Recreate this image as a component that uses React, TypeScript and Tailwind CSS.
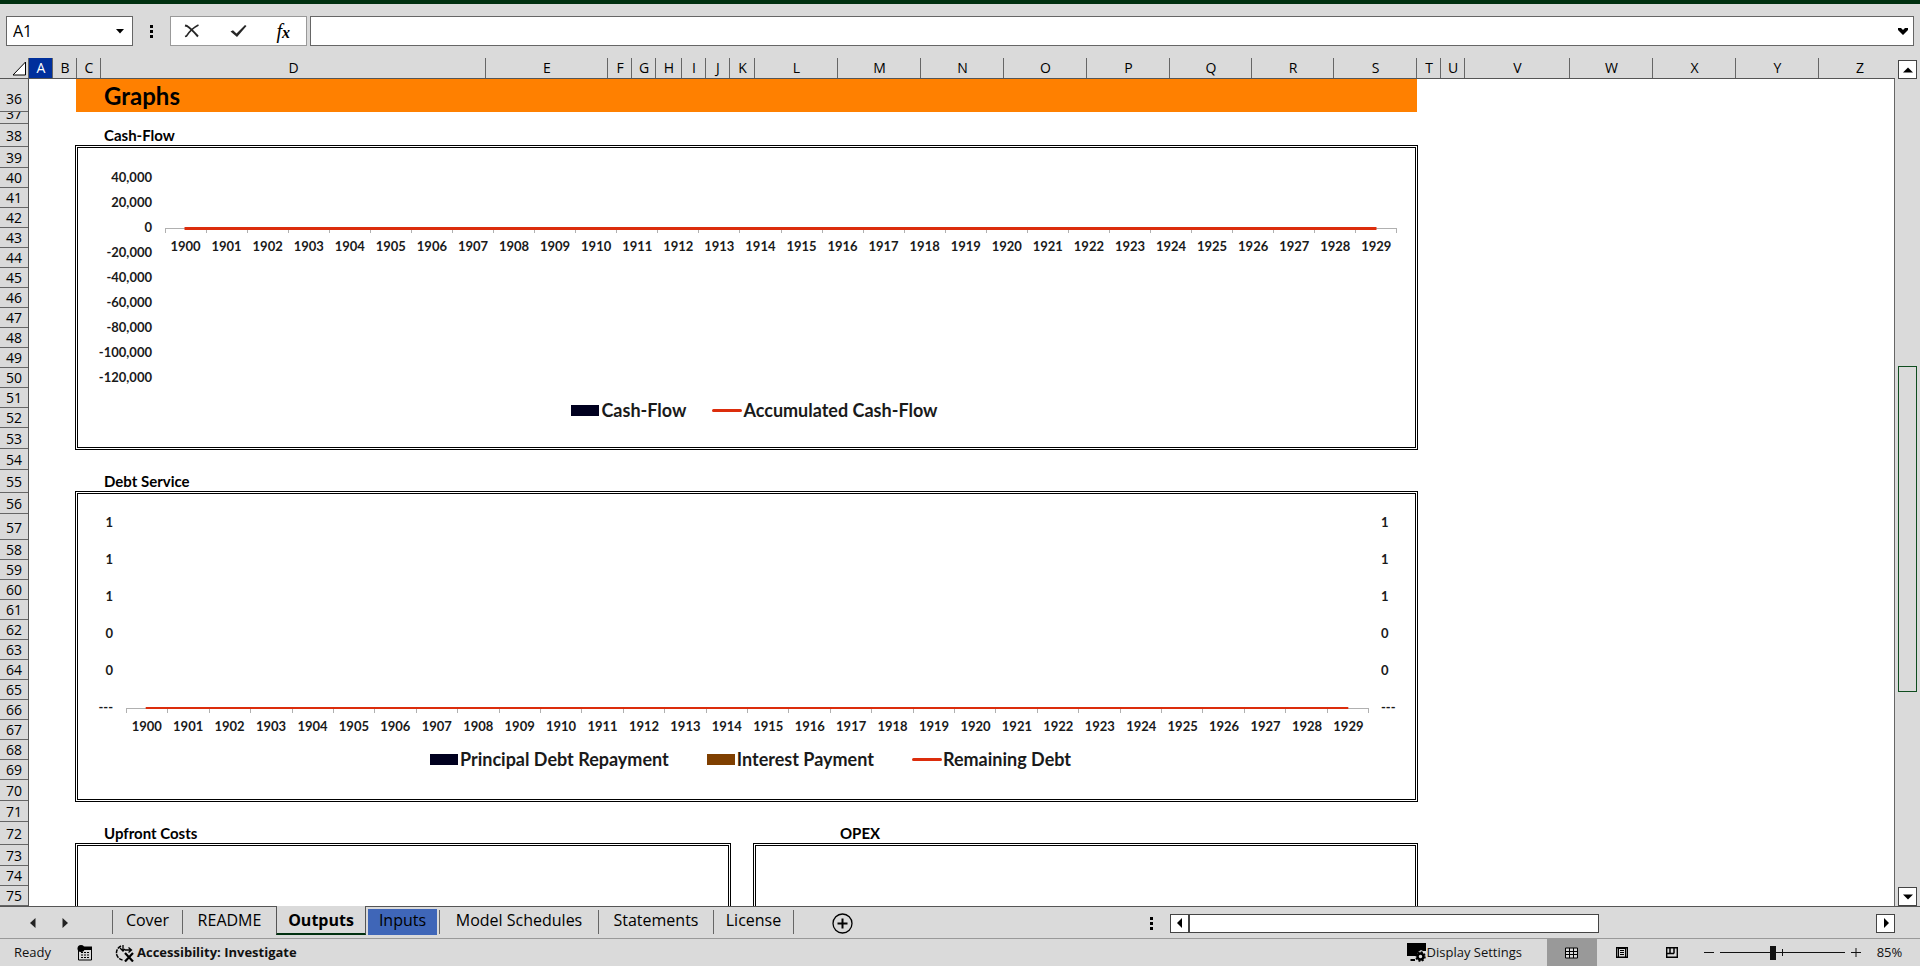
import React from 'react'

const columns = [
  { name: 'A', width: 24 }, { name: 'B', width: 24 }, { name: 'C', width: 24 }, { name: 'D', width: 385 },
  { name: 'E', width: 122 }, { name: 'F', width: 24 }, { name: 'G', width: 24 }, { name: 'H', width: 26 },
  { name: 'I', width: 24 }, { name: 'J', width: 24 }, { name: 'K', width: 25 }, { name: 'L', width: 83 },
  { name: 'M', width: 83 }, { name: 'N', width: 83 }, { name: 'O', width: 83 }, { name: 'P', width: 83 },
  { name: 'Q', width: 82 }, { name: 'R', width: 82 }, { name: 'S', width: 83 }, { name: 'T', width: 24 },
  { name: 'U', width: 24 }, { name: 'V', width: 105 }, { name: 'W', width: 83 }, { name: 'X', width: 83 },
  { name: 'Y', width: 83 },
]

// rows that differ from the default height of 20
const rowHeights: Record<number, number> = {
  36: 33, 37: 12, 38: 23, 39: 21, 53: 21, 54: 21, 55: 23, 56: 21, 57: 26, 70: 21, 71: 21, 72: 23, 73: 21,
}
const rows = Array.from({ length: 40 }, (_, i) => 36 + i)
const years = Array.from({ length: 30 }, (_, i) => 1900 + i)

function Dots() {
  return (
    <div className="flex flex-col gap-[2px]">
      <span className="h-[3px] w-[3px] bg-black" />
      <span className="h-[3px] w-[3px] bg-black" />
      <span className="h-[3px] w-[3px] bg-black" />
    </div>
  )
}

function FormulaBar() {
  return (
    <div className="flex h-[54px] shrink-0 items-start pt-3 pr-[6px] pl-[6px]">
      <div className="flex h-[30px] w-[127px] items-center border border-[#666] bg-white pr-2">
        <input aria-label="Name Box" defaultValue="A1" className="w-full min-w-0 bg-transparent pl-[6px] text-base outline-none" />
        <button aria-label="Name list">
          <svg width="8" height="5" viewBox="0 0 8 5"><path d="M0 0h8L4 4.500z" /></svg>
        </button>
      </div>
      <div className="flex h-[30px] w-[37px] items-center justify-center"><Dots /></div>
      <div className="mr-[3px] flex h-[30px] w-[137px] items-center justify-between border border-[#999] bg-white pr-4 pl-[13px]">
        <button aria-label="Cancel">
          <svg width="16" height="16" viewBox="0 0 16 16" fill="none" stroke="#262626">
            <path d="M1 2.500L3 3C7 5.500 10 9 14 13.500" strokeWidth="1.900" />
            <path d="M14.500 2C9.500 4.500 5 9 2.500 13L1 13.500" strokeWidth="1.500" />
          </svg>
        </button>
        <button aria-label="Enter">
          <svg width="17" height="14" viewBox="0 0 17 14" fill="#262626">
            <path d="M0.500 7.500L3 6.200l3.500 3.300L15 1l1.500 1L7 13z" />
          </svg>
        </button>
        <button aria-label="Insert Function" className="flex items-baseline font-['Liberation_Serif',serif] leading-5 italic">
          <span className="text-xl">f</span>
          <span className="text-base font-bold">x</span>
        </button>
      </div>
      <div className="flex h-[30px] min-w-0 flex-1 items-center border border-[#666] bg-white pr-[5px]">
        <input aria-label="Formula Bar" className="h-full min-w-0 flex-1 bg-transparent px-2 text-base outline-none" />
        <button aria-label="Expand Formula Bar">
          <svg width="10" height="7" viewBox="0 0 10 7"><path d="M0 0h3l2 2 2-2h3v2L5 7 0 2z" /></svg>
        </button>
      </div>
    </div>
  )
}

function ColumnHeaders() {
  return (
    <div className="flex h-[21px] shrink-0 overflow-hidden border-b border-[#555] text-sm leading-5">
      <button aria-label="Select All" className="w-[29px] shrink-0 border-r border-[#666] pl-3">
        <svg width="15" height="15" viewBox="0 0 15 15"><path d="M13.500 1v13H1z" fill="#fff" stroke="#000" /></svg>
      </button>
      {columns.map((col) => (
        <div
          key={col.name}
          style={{ width: col.width }}
          className={
            col.name === 'A'
              ? 'shrink-0 border-r border-[#666] bg-[#002f9c] pl-px text-center text-white'
              : 'shrink-0 border-r border-[#666] pl-px text-center'
          }
        >
          {col.name}
        </div>
      ))}
      <div className="min-w-0 flex-1 pl-[6px] text-center">Z</div>
    </div>
  )
}

function RowHeaders() {
  return (
    <div className="w-[29px] shrink-0 border-r border-[#555] bg-[#dadada] text-sm">
      {rows.map((row) => {
        const height = rowHeights[row] ?? 20
        return (
          <div
            key={row}
            style={{ height, paddingBottom: height > 22 ? Math.round((height - 20) / 4) : 0 }}
            className="flex items-end justify-center overflow-hidden border-b border-[#666] leading-[18px]"
          >
            {row}
          </div>
        )
      })}
    </div>
  )
}

function Axis(props: { width: number; thick: number }) {
  const step = props.width / 30
  return (
    <svg width={props.width + 1} height="7" viewBox={`0 0 ${props.width + 1} 7`} className="block">
      <path d={`M0 1.500H${props.width + 1}`} stroke="#b0b0b0" />
      {Array.from({ length: 31 }, (_, i) => (
        <path key={i} d={`M${Math.round(i * step) + 0.5} 1v5`} stroke="#b0b0b0" />
      ))}
      <path
        d={`M${step / 2 - 1} ${props.thick / 2}H${props.width - step / 2 + 1}`}
        stroke="#dc2d0c"
        strokeWidth={props.thick}
      />
    </svg>
  )
}

function Years() {
  return (
    <div className="flex text-[13px] leading-4">
      {years.map((year) => (
        <span key={year} className="flex-1 text-center">{year}</span>
      ))}
    </div>
  )
}

function Swatch(props: { color: string }) {
  return <span className={`mr-[2px] h-[11px] w-7 ${props.color}`} />
}

function LineKey() {
  return <span className="mr-px h-[3px] w-[30px] rounded-full bg-[#dc2d0c]" />
}

function CashFlowChart() {
  const values = ['40,000', '20,000', '0', '-20,000', '-40,000', '-60,000', '-80,000', '-100,000', '-120,000']
  return (
    <div className="h-[305px] w-[1343px] border-[3px] border-double border-black font-['Lato',sans-serif] font-bold text-[#1a1a1a]">
      <div className="flex">
        <div className="w-[74px] pt-[17px] text-right text-[13px] leading-[25px]">
          {values.map((v) => <div key={v}>{v}</div>)}
        </div>
        <div className="ml-[13px] w-[1232px] pt-[79px]">
          <Axis width={1231} thick={3} />
          <div className="pt-1"><Years /></div>
        </div>
      </div>
      <div className="flex items-center justify-center gap-[26px] pt-[9px] pl-4 text-lg leading-[22px]">
        <div className="flex items-center"><Swatch color="bg-[#00001f]" />Cash-Flow</div>
        <div className="flex items-center"><LineKey />Accumulated Cash-Flow</div>
      </div>
    </div>
  )
}

function DebtChart() {
  const values = ['1', '1', '1', '0', '0', '---']
  return (
    <div className="h-[311px] w-[1343px] border-[3px] border-double border-black font-['Lato',sans-serif] font-bold text-[#1a1a1a]">
      <div className="flex">
        <div className="w-[35px] pt-[10px] text-right text-[13px] leading-[37px]">
          {values.map((v, i) => <div key={i}>{v}</div>)}
        </div>
        <div className="ml-[13px] w-[1243px] pt-[213px]">
          <Axis width={1242} thick={2} />
          <div className="pt-1"><Years /></div>
        </div>
        <div className="ml-3 pt-[10px] text-[13px] leading-[37px]">
          {values.map((v, i) => <div key={i}>{v}</div>)}
        </div>
      </div>
      <div className="flex items-center justify-center gap-[38px] pt-[14px] pl-2 text-lg leading-[22px]">
        <div className="flex items-center"><Swatch color="bg-[#00001f]" />Principal Debt Repayment</div>
        <div className="flex items-center"><Swatch color="bg-[#7f3f00]" />Interest Payment</div>
        <div className="flex items-center"><LineKey />Remaining Debt</div>
      </div>
    </div>
  )
}

function Sheet() {
  return (
    <div className="min-w-0 flex-1 overflow-hidden bg-white pl-[46px] font-['Lato',sans-serif] text-[15px] leading-[18px] font-bold">
      <h1 className="ml-px flex h-[33px] w-[1341px] items-center bg-[#ff8000] pl-7 text-2xl">Graphs</h1>
      <h2 className="flex h-[33px] items-end pb-px pl-[29px]">Cash-Flow</h2>
      <CashFlowChart />
      <h2 className="flex h-[41px] items-end pb-px pl-[29px]">Debt Service</h2>
      <DebtChart />
      <div className="flex gap-[22px]">
        <div className="w-[656px]">
          <h2 className="flex h-[41px] items-end pb-px pl-[29px]">Upfront Costs</h2>
          <div className="h-[200px] border-[3px] border-double border-black" />
        </div>
        <div className="w-[665px]">
          <h2 className="flex h-[41px] items-end pb-px pl-[87px]">OPEX</h2>
          <div className="h-[200px] border-[3px] border-double border-black" />
        </div>
      </div>
    </div>
  )
}

function ScrollButton(props: { label: string; path: string }) {
  return (
    <button aria-label={props.label} className="flex h-[19px] w-[19px] shrink-0 items-center justify-center border border-[#444] bg-white">
      <svg width="10" height="10" viewBox="0 0 10 10"><path d={props.path} /></svg>
    </button>
  )
}

function SheetTabs() {
  const tab = 'h-6 border-r border-[#666] pb-1'
  return (
    <div className="flex h-8 shrink-0 items-start text-base">
      <div className="flex h-full w-[112px] items-center gap-[26px] border-t border-[#555] pl-[30px]">
        <button aria-label="Previous sheet"><svg width="6" height="10" viewBox="0 0 6 10"><path d="M5.500 0v10L0 5z" fill="#222" /></svg></button>
        <button aria-label="Next sheet"><svg width="6" height="10" viewBox="0 0 6 10"><path d="M0.500 0v10L6 5z" fill="#222" /></svg></button>
      </div>
      <div className="flex h-full border-t border-[#555] pt-[3px] leading-5">
        <button className={`${tab} w-[71px] border-l`}>Cover</button>
        <button className="h-6 w-[93px] pb-1">README</button>
      </div>
      <button className="h-[29px] w-[90px] border-x border-b-2 border-x-[#555] border-b-[#00300f] pt-px font-bold">Outputs</button>
      <div className="flex h-full flex-1 border-t border-[#555] pt-[3px] pl-[2px] leading-5">
        <button className="-mt-px mr-[2px] h-[26px] w-[69px] bg-[#3f66b8] pb-1">Inputs</button>
        <button className={`${tab} w-[160px] border-l`}>Model Schedules</button>
        <button className={`${tab} w-[115px]`}>Statements</button>
        <button className={`${tab} w-[80px]`}>License</button>
        <button aria-label="New sheet" className="ml-[38px] flex h-[26px] items-center">
          <svg width="21" height="21" viewBox="0 0 21 21" fill="none" stroke="#000">
            <circle cx="10.500" cy="10.500" r="9.500" strokeWidth="1.300" />
            <path d="M5.500 10.500h10M10.500 5.500v10" strokeWidth="2" />
          </svg>
        </button>
        <div className="ml-auto flex h-[26px] w-[770px] items-center">
          <Dots />
          <div className="ml-[17px] flex flex-1">
            <ScrollButton label="Scroll left" path="M7 0v10L2 5z" />
            <div className="-ml-px h-[19px] w-[411px] border border-[#444] border-l-2 bg-white" />
            <div className="flex-1" />
            <ScrollButton label="Scroll right" path="M3 0v10l5-5z" />
          </div>
          <div className="w-[25px]" />
        </div>
      </div>
    </div>
  )
}

function StatusBar() {
  return (
    <div className="flex h-7 shrink-0 items-center border-t border-[#999] text-[13px] text-[#111]">
      <span className="w-[77px] pl-[14px]">Ready</span>
      <button aria-label="Macro recording" className="w-[38px]">
        <svg width="16" height="16" viewBox="0 0 16 16">
          <path d="M1.500 3.500h13v11.500h-13z" fill="none" stroke="#000" />
          <path d="M7 1.500h8V5H7z" />
          <circle cx="4" cy="3.500" r="3.500" />
          <path d="M4 7.500h9M4 10h9M4 12.500h9" stroke="#000" strokeDasharray="2 1" />
        </svg>
      </button>
      <button className="flex items-center gap-[2px] font-bold">
        <svg width="20" height="18" viewBox="0 0 20 18" fill="none" stroke="#000">
          <path d="M6 2C2 4 0.500 8 2 11.500 3 14 5 15.500 7.500 16" strokeWidth="1.500" strokeDasharray="4 1" />
          <path d="M8 1v5M5 4l3 3 2-2M10 6h6M13.500 3.500L16.500 6l-3 2.500" strokeWidth="1.300" />
          <path d="M10 9l8 8.500M18 9l-8 8.500" strokeWidth="2.200" />
        </svg>
        Accessibility: Investigate
      </button>
      <button className="ml-auto flex items-center gap-px">
        <svg width="19" height="19" viewBox="0 0 19 19">
          <path d="M0 0h19v8h-3l-2-1-3 2-1 4H0z" />
          <path d="M3.500 16H8v2H3.500z" />
          <circle cx="13.500" cy="13.500" r="3" fill="none" stroke="#000" strokeWidth="2.500" />
          <circle cx="13.500" cy="13.500" r="4.500" fill="none" stroke="#000" strokeWidth="1.500" strokeDasharray="2 1.500" />
        </svg>
        Display Settings
      </button>
      <div className="ml-[25px] flex h-full">
        <button aria-label="Normal" className="flex w-[50px] items-center justify-center bg-[#999]">
          <svg width="14" height="12" viewBox="0 0 14 12">
            <path d="M0.500 1h12v10h-12zM0.500 4.500h12M0.500 7.500h12M4.500 1v10M8.500 1v10" fill="#dadada" stroke="#000" />
          </svg>
        </button>
        <button aria-label="Page Layout" className="flex w-[50px] items-center justify-center">
          <svg width="12" height="11" viewBox="0 0 12 11" fill="none" stroke="#000">
            <path d="M0.700 0.700h10.600v9.600H0.700z" strokeWidth="1.400" />
            <path d="M2.500 1v9M9.500 1v9M4 3.500h4M4 5.500h4M4 7.500h4M2.500 1.500h7" />
          </svg>
        </button>
        <button aria-label="Page Break Preview" className="flex w-[50px] items-center justify-center">
          <svg width="12" height="11" viewBox="0 0 12 11" fill="none" stroke="#000">
            <path d="M0.700 0.700h10.600v9.600H0.700z" strokeWidth="1.400" />
            <path d="M4 1v5.500M8 1v5.500M1 6.500h7" strokeWidth="1.500" />
          </svg>
        </button>
      </div>
      <button aria-label="Zoom out" className="ml-[7px]"><svg width="10" height="10"><path d="M0 4.500h10" stroke="#111" /></svg></button>
      <div className="relative ml-[6px] h-4 w-[125px]">
        <div className="mt-[7px] h-px bg-[#111]" />
        <div className="absolute top-1 left-[62px] h-[7px] w-px bg-[#111]" />
        <input type="range" aria-label="Zoom" min="10" max="190" defaultValue="85" className="absolute inset-0 h-4 w-full appearance-none bg-transparent [&::-webkit-slider-thumb]:h-[14px] [&::-webkit-slider-thumb]:w-[6px] [&::-webkit-slider-thumb]:appearance-none [&::-webkit-slider-thumb]:bg-[#111]" />
      </div>
      <button aria-label="Zoom in" className="ml-[6px]"><svg width="10" height="10"><path d="M0 4.500h10M5 0v9" stroke="#111" /></svg></button>
      <button className="w-[59px] pr-[2px] text-center">85%</button>
    </div>
  )
}

function App() {
  return (
    <div className="flex h-screen flex-col overflow-hidden bg-[#dadada] font-['Open_Sans',sans-serif] text-black">
      <div className="h-1 shrink-0 bg-[#00300f]" />
      <FormulaBar />
      <div className="flex min-h-0 flex-1">
        <div className="flex min-w-0 flex-1 flex-col">
          <ColumnHeaders />
          <div className="flex min-h-0 flex-1 overflow-hidden border-r border-[#666]">
            <RowHeaders />
            <Sheet />
          </div>
        </div>
        <div className="flex w-[25px] shrink-0 flex-col items-start pt-[2px] pl-[3px]">
          <ScrollButton label="Scroll up" path="M0 7.500h10L5 2.500z" />
          <div className="grow-[287]" />
          <div className="h-[326px] w-[19px] border border-[#0f4d1f]" />
          <div className="grow-[195]" />
          <ScrollButton label="Scroll down" path="M0 2.500h10l-5 5z" />
        </div>
      </div>
      <SheetTabs />
      <StatusBar />
    </div>
  )
}

export default App
